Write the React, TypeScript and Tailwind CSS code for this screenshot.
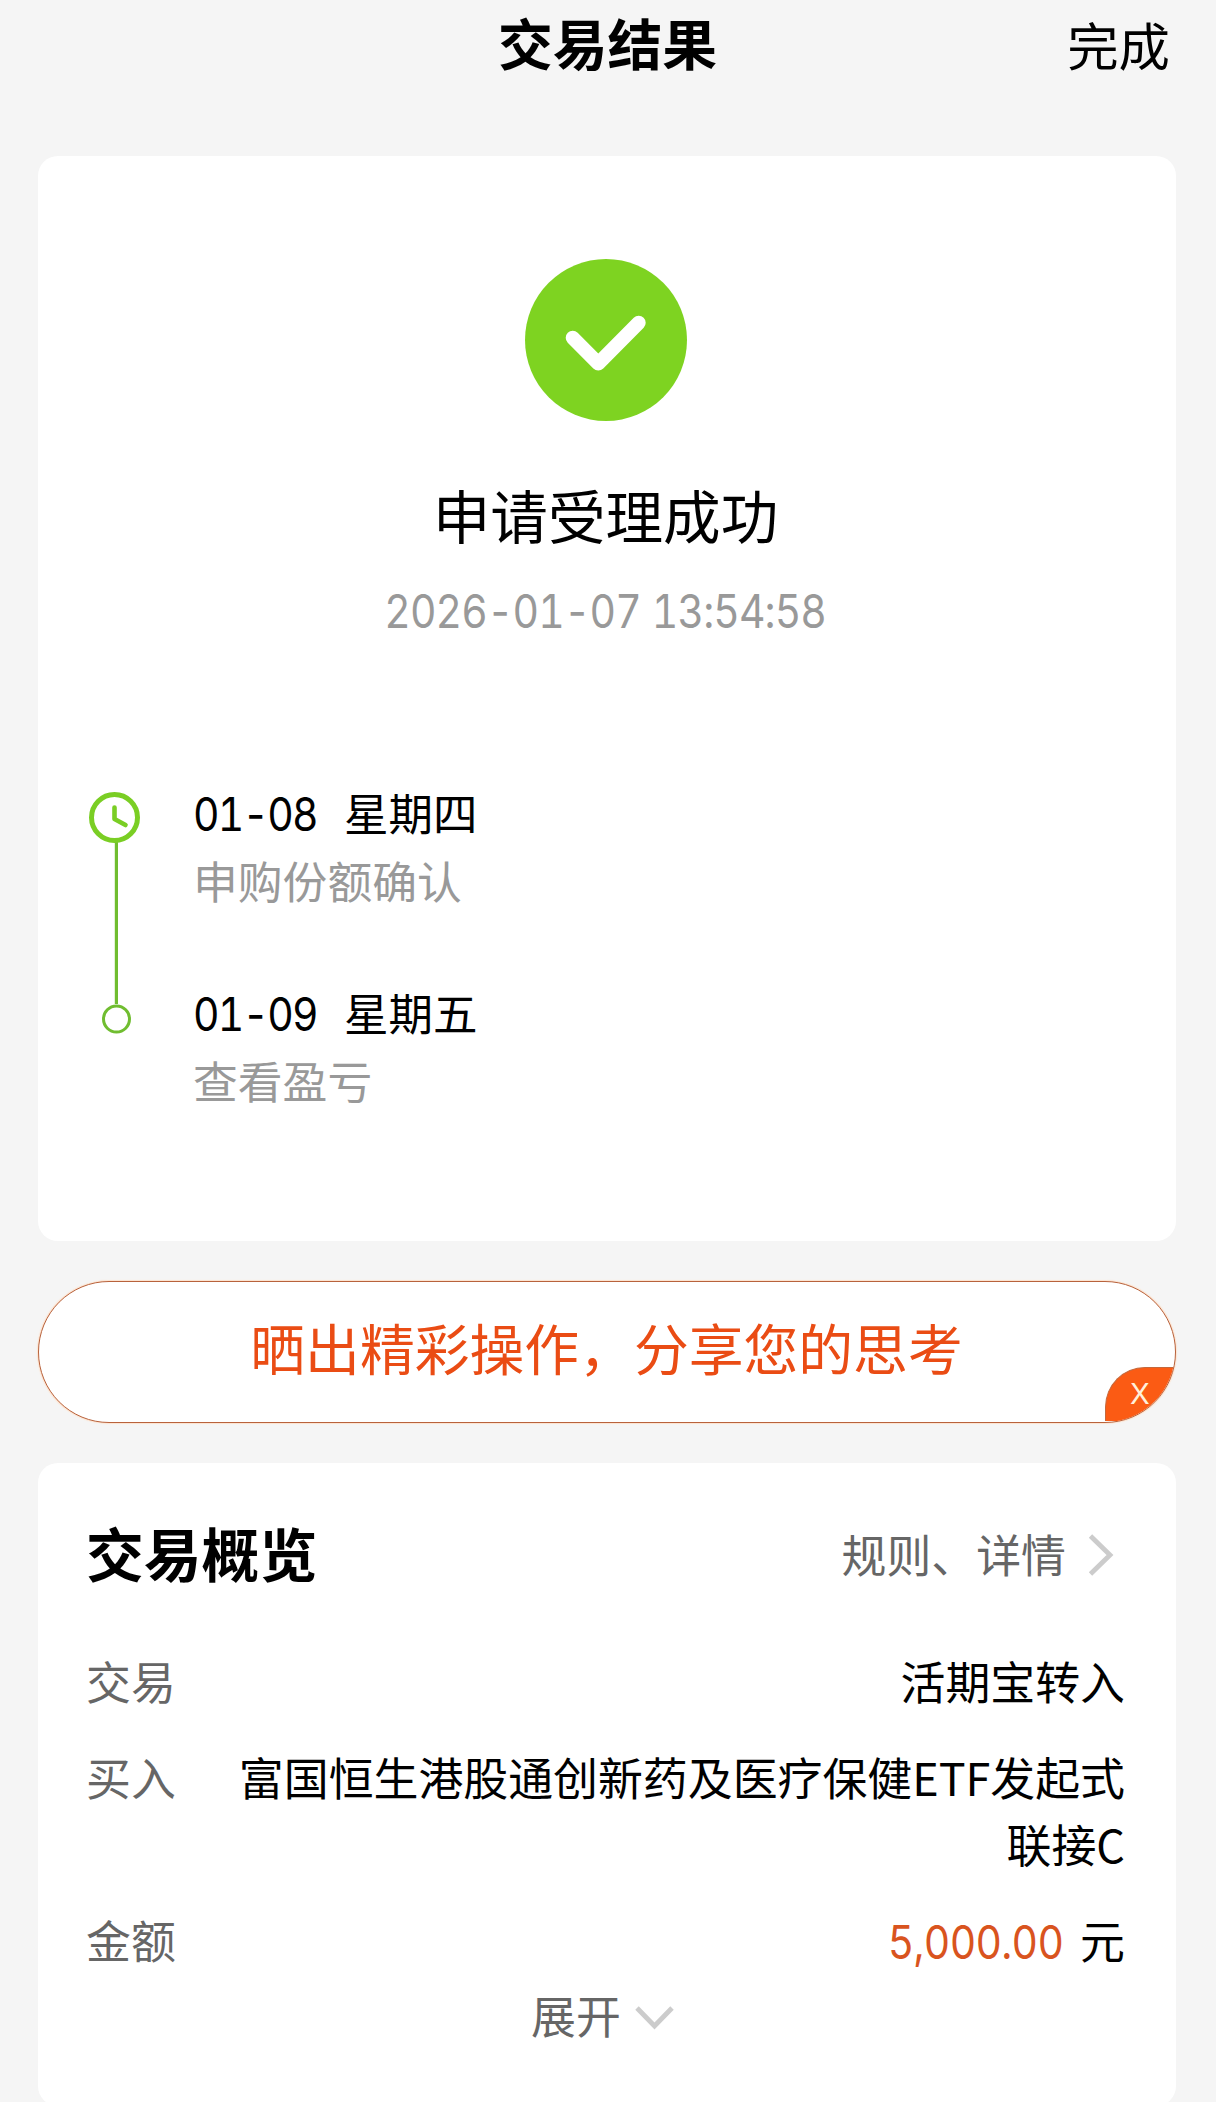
import type { ReactNode } from "react";

function Num({ value, className }: { value: string; className: string }) {
  return (
    <span className={"inline-block scale-x-[0.89] font-[Inter,'Noto_Sans_CJK_SC',sans-serif] text-[46px] leading-none whitespace-pre tabular-nums " + className}>
      {value}
    </span>
  );
}

function Row({ label, children }: { label: string; children: ReactNode }) {
  return (
    <div className="flex justify-between">
      <span className="text-[#666]">{label}</span>
      <span className="text-right text-black">{children}</span>
    </div>
  );
}

function Step({ date, day, note }: { date: string; day: string; note: string }) {
  return (
    <div className="h-[201px]">
      <div className="-mt-px flex items-baseline text-[44.5px] leading-[66px] text-black">
        <Num className="w-[151px] origin-left tracking-[-2px]" value={date} />
        <span>{day}</span>
      </div>
      <div className="mt-[2px] text-[44.8px] leading-[66px] text-[#999]">{note}</div>
    </div>
  );
}

export default function App() {
  return (
    <div className="h-[2102px] w-[1216px] overflow-hidden bg-[#f5f5f5] px-[38px] font-['Noto_Sans_CJK_SC',sans-serif]">
      <header className="grid h-[156px] grid-cols-3 items-start">
        <span />
        <h1 className="mt-px mr-px text-center text-[54.8px] leading-[80px] font-bold text-black">交易结果</h1>
        <button className="mt-[4px] mr-[8px] justify-self-end text-[51.4px] leading-[80px] text-black">完成</button>
      </header>

      <section className="h-[1085px] w-[1138px] rounded-[20px] bg-white pt-[103px]">
        <svg className="ml-[487px] block" width="162" height="162" viewBox="0 0 162 162" fill="none">
          <circle cx="81" cy="81" r="81" fill="#7ed321" />
          <path d="M47.7 78.7 L73.3 104.5 L113.7 63.7" stroke="#fff" strokeWidth="14" strokeLinecap="round" strokeLinejoin="round" />
        </svg>
        <h2 className="mt-[50px] mr-[3px] text-center text-[57.6px] leading-[86px] text-black">申请受理成功</h2>
        <div className="mt-[18px] mr-[3px] h-[66px] text-center text-[46px] leading-[66px] text-[#999]">
          <Num value="2026-01-07 13:54:58" className="tracking-[-1px] [word-spacing:1px]" />
        </div>
        <div className="mt-[139px] flex">
          <svg className="mt-[10px] ml-[47px] block" width="60" height="250" viewBox="0 0 60 250" fill="none">
            <path d="M31.4 50 V214" stroke="#70bd30" strokeWidth="3.2" />
            <circle cx="29.5" cy="27.5" r="23" stroke="#7ace24" strokeWidth="5" />
            <path d="M29.5 17.5 V29 L40.5 35" stroke="#7ace24" strokeWidth="4.6" strokeLinecap="round" strokeLinejoin="round" />
            <circle cx="31.5" cy="229" r="13" stroke="#70bd30" strokeWidth="3" />
          </svg>
          <div className="ml-[48px]">
            <Step date="01-08" day="星期四" note="申购份额确认" />
            <Step date="01-09" day="星期五" note="查看盈亏" />
          </div>
        </div>
      </section>

      <section className="relative mt-10 h-[142px] w-[1138px] overflow-hidden rounded-full border border-[#b8623c] bg-white text-center text-[54.8px] leading-[129px] text-[#ea4c14] shadow-[0_0_1px_1px_#fde3cf]">
        <span className="mr-px">晒出精彩操作，分享您的思考</span>
        <button className="absolute right-0 bottom-px flex h-[54px] w-[70px] items-center rounded-tl-[40px] border-t border-l border-[#c4683c] bg-[#fb5b14] pb-[3px] pl-[24px] font-[Inter,sans-serif] text-[29px] leading-none text-[#fff0dc]">X</button>
      </section>

      <section className="mt-10 h-[643px] w-[1138px] rounded-[20px] bg-white pt-[48px] pr-[51px] pl-[48px] text-[44.9px] leading-[67px]">
        <div className="flex h-[84px] items-center justify-between">
          <h2 className="-mt-[2px] text-[57.8px] leading-[84px] font-bold text-black">交易概览</h2>
          <div className="flex items-center pr-[11px] text-[#666]">
            规则、详情
            <svg className="mt-[3px] ml-[22px]" width="26" height="44" viewBox="0 0 26 44" fill="none">
              <path d="M2.5 3 L22 22 L2.5 41" stroke="#ccc" strokeWidth="4.8" />
            </svg>
          </div>
        </div>
        <div className="mt-[52px] flex flex-col gap-[29px]">
          <Row label="交易">活期宝转入</Row>
          <Row label="买入">富国恒生港股通创新药及医疗保健ETF发起式<br />联接C</Row>
          <Row label="金额">
            <Num value="5,000.00" className="mr-[17px] origin-right tracking-[-0.8px] text-[#d9541e]" />元
          </Row>
        </div>
        <div className="mt-[8px] flex items-center pl-[445px] text-[#666]">
          展开
          <svg className="mt-[5px] ml-[13px]" width="42" height="26" viewBox="0 0 42 26" fill="none">
            <path d="M3 4 L20.5 22 L38 4" stroke="#ccc" strokeWidth="4.8" />
          </svg>
        </div>
      </section>
    </div>
  );
}
